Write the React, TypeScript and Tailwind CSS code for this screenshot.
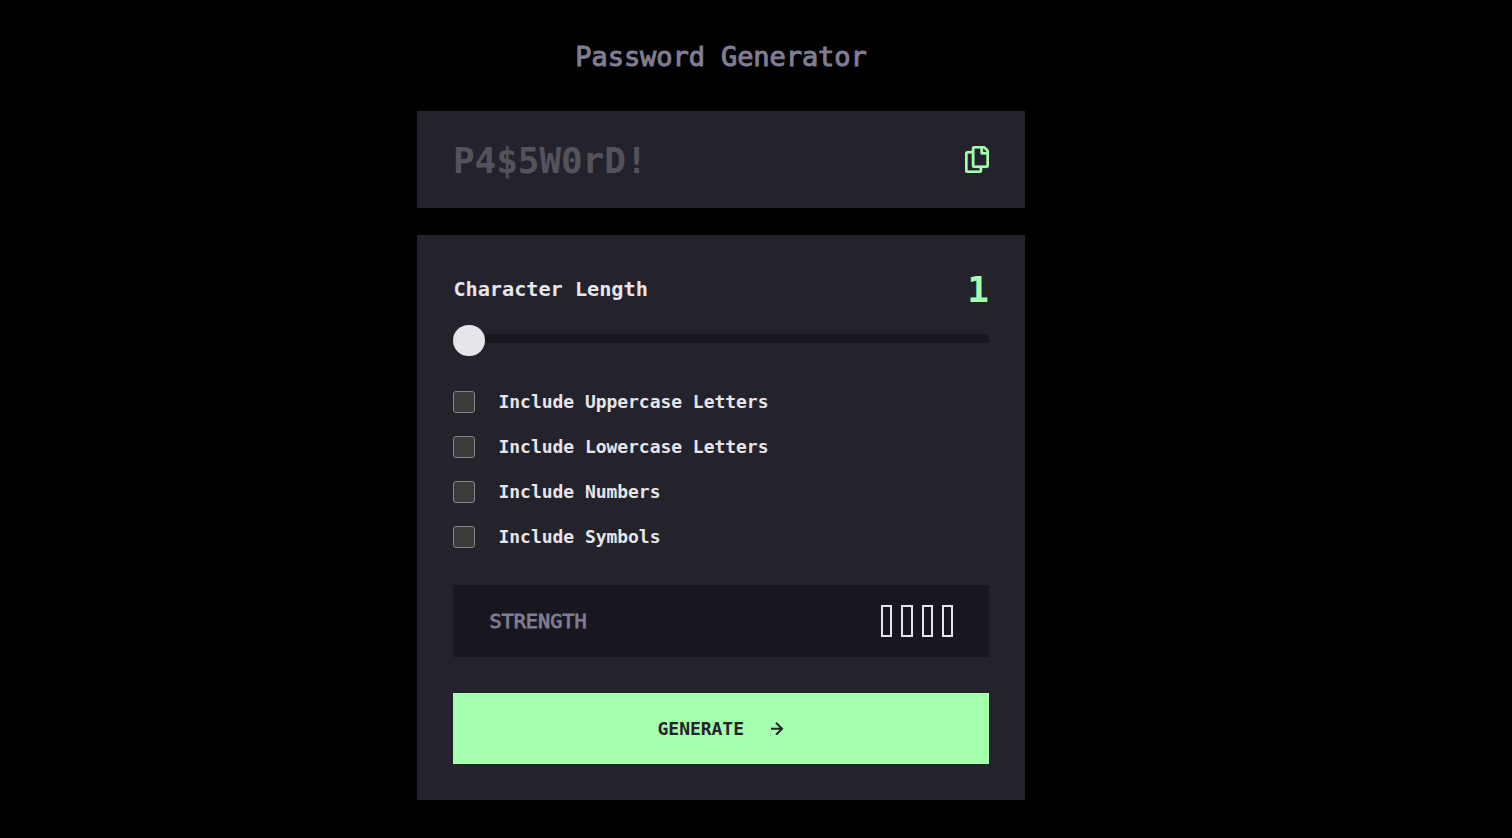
import { useState } from "react";

const OPTIONS = [
  "Include Uppercase Letters",
  "Include Lowercase Letters",
  "Include Numbers",
  "Include Symbols",
];

function CopyIcon() {
  return (
    <svg width="24" height="27" viewBox="0 0 21 24" preserveAspectRatio="none" fill="#a4ffaf" stroke="#a4ffaf" strokeWidth="0.2" aria-hidden="true">
      <path d="M20.341 3.091 17.909.659A2.25 2.25 0 0 0 16.319 0H8.25A2.25 2.25 0 0 0 6 2.25V4.5H2.25A2.25 2.25 0 0 0 0 6.75v15A2.25 2.25 0 0 0 2.25 24h10.5A2.25 2.25 0 0 0 15 21.75V19.5h3.75A2.25 2.25 0 0 0 21 17.25V4.682a2.25 2.25 0 0 0-.659-1.591ZM12.469 21.75H2.53a.281.281 0 0 1-.281-.281V7.03a.281.281 0 0 1 .281-.281H6v10.5a2.25 2.25 0 0 0 2.25 2.25h4.5v1.969a.282.282 0 0 1-.281.281Zm6-4.5H8.53a.281.281 0 0 1-.281-.281V2.53a.281.281 0 0 1 .281-.281H13.5v4.125c0 .621.504 1.125 1.125 1.125h4.125v9.469a.282.282 0 0 1-.281.281Zm.281-12h-3v-3h.451c.075 0 .147.03.2.082L18.667 4.6a.283.283 0 0 1 .082.199v.451Z" />
    </svg>
  );
}

function ArrowIcon() {
  return (
    <svg width="13.5" height="13.5" viewBox="0 0 12 12" fill="#24232c" aria-hidden="true">
      <path d="m5.106 12 6-6-6-6-1.265 1.265 3.841 3.84H.001v1.79h7.681l-3.841 3.84z" />
    </svg>
  );
}

function Option({ label }: { label: string }) {
  const [checked, setChecked] = useState(false);
  return (
    <label className="flex h-[22px] items-center">
      <input
        type="checkbox"
        checked={checked}
        onChange={() => setChecked(!checked)}
        className="size-[22px] shrink-0 appearance-none rounded-[3px] border border-[#858585] bg-[#3b3b3b] checked:bg-[#a4ffaf]"
      />
      <span className="ml-[23.5px] whitespace-nowrap text-[18px] leading-6 font-bold tracking-[-0.04px]">{label}</span>
    </label>
  );
}

export default function App() {
  return (
    <div className="flex h-screen w-full flex-col items-center overflow-hidden bg-black pr-[70px] font-['DejaVu_Sans_Mono',monospace] text-[#e6e5ea]">
      <main className="mt-[39px] w-[608px]">
        <h1 className="h-9 text-center text-[27px] leading-9 font-normal tracking-[-0.07px] text-[#817d92] [-webkit-text-stroke:1px_#817d92]">
          Password Generator
        </h1>

        <section className="mt-9 flex h-[97px] items-center justify-between bg-[#24232c] px-9">
          <span className="pt-0.5 text-[36px] leading-[48px] font-bold tracking-[-0.07px] text-[#54535b]">P4$5W0rD!</span>
          <button type="button" aria-label="Copy password">
            <CopyIcon />
          </button>
        </section>

        <section className="mt-[27px] flex h-[565px] flex-col bg-[#24232c] px-9 pt-[30px]">
          <div className="flex h-12 items-center justify-between">
            <span className="pl-[0.4px] text-[20.25px] leading-7 font-bold tracking-[-0.04px]">Character Length</span>
            <span className="pt-0.5 text-[36px] leading-[48px] font-bold text-[#a4ffaf]">1</span>
          </div>

          <div className="mt-3 flex h-[31px] items-center">
            <div className="h-[31px] w-8 shrink-0 rounded-full bg-[#e6e5ea]" />
            <div className="-mt-1 h-[9px] grow bg-[#18171f]" />
          </div>

          <div className="mt-[35px] flex flex-col gap-[23px]">
            {OPTIONS.map((label) => (
              <Option key={label} label={label} />
            ))}
          </div>

          <div className="mt-[37px] flex h-[72px] shrink-0 items-center justify-between bg-[#18171f] px-9">
            <span className="pl-[0.4px] text-[20.25px] leading-7 font-normal tracking-[-0.04px] text-[#817d92] [-webkit-text-stroke:0.8px_#817d92]">
              STRENGTH
            </span>
            <div className="flex gap-[9px]">
              {[0, 1, 2, 3].map((bar) => (
                <span key={bar} className="h-8 w-[11.25px] border-2 border-[#e6e5ea]" />
              ))}
            </div>
          </div>

          <button
            type="button"
            className="mt-9 flex h-[71px] shrink-0 items-center justify-center gap-[27px] bg-[#a4ffaf] text-[18px] font-bold tracking-[-0.04px] text-[#24232c]"
          >
            <span>GENERATE</span>
            <ArrowIcon />
          </button>
        </section>
      </main>
    </div>
  );
}
